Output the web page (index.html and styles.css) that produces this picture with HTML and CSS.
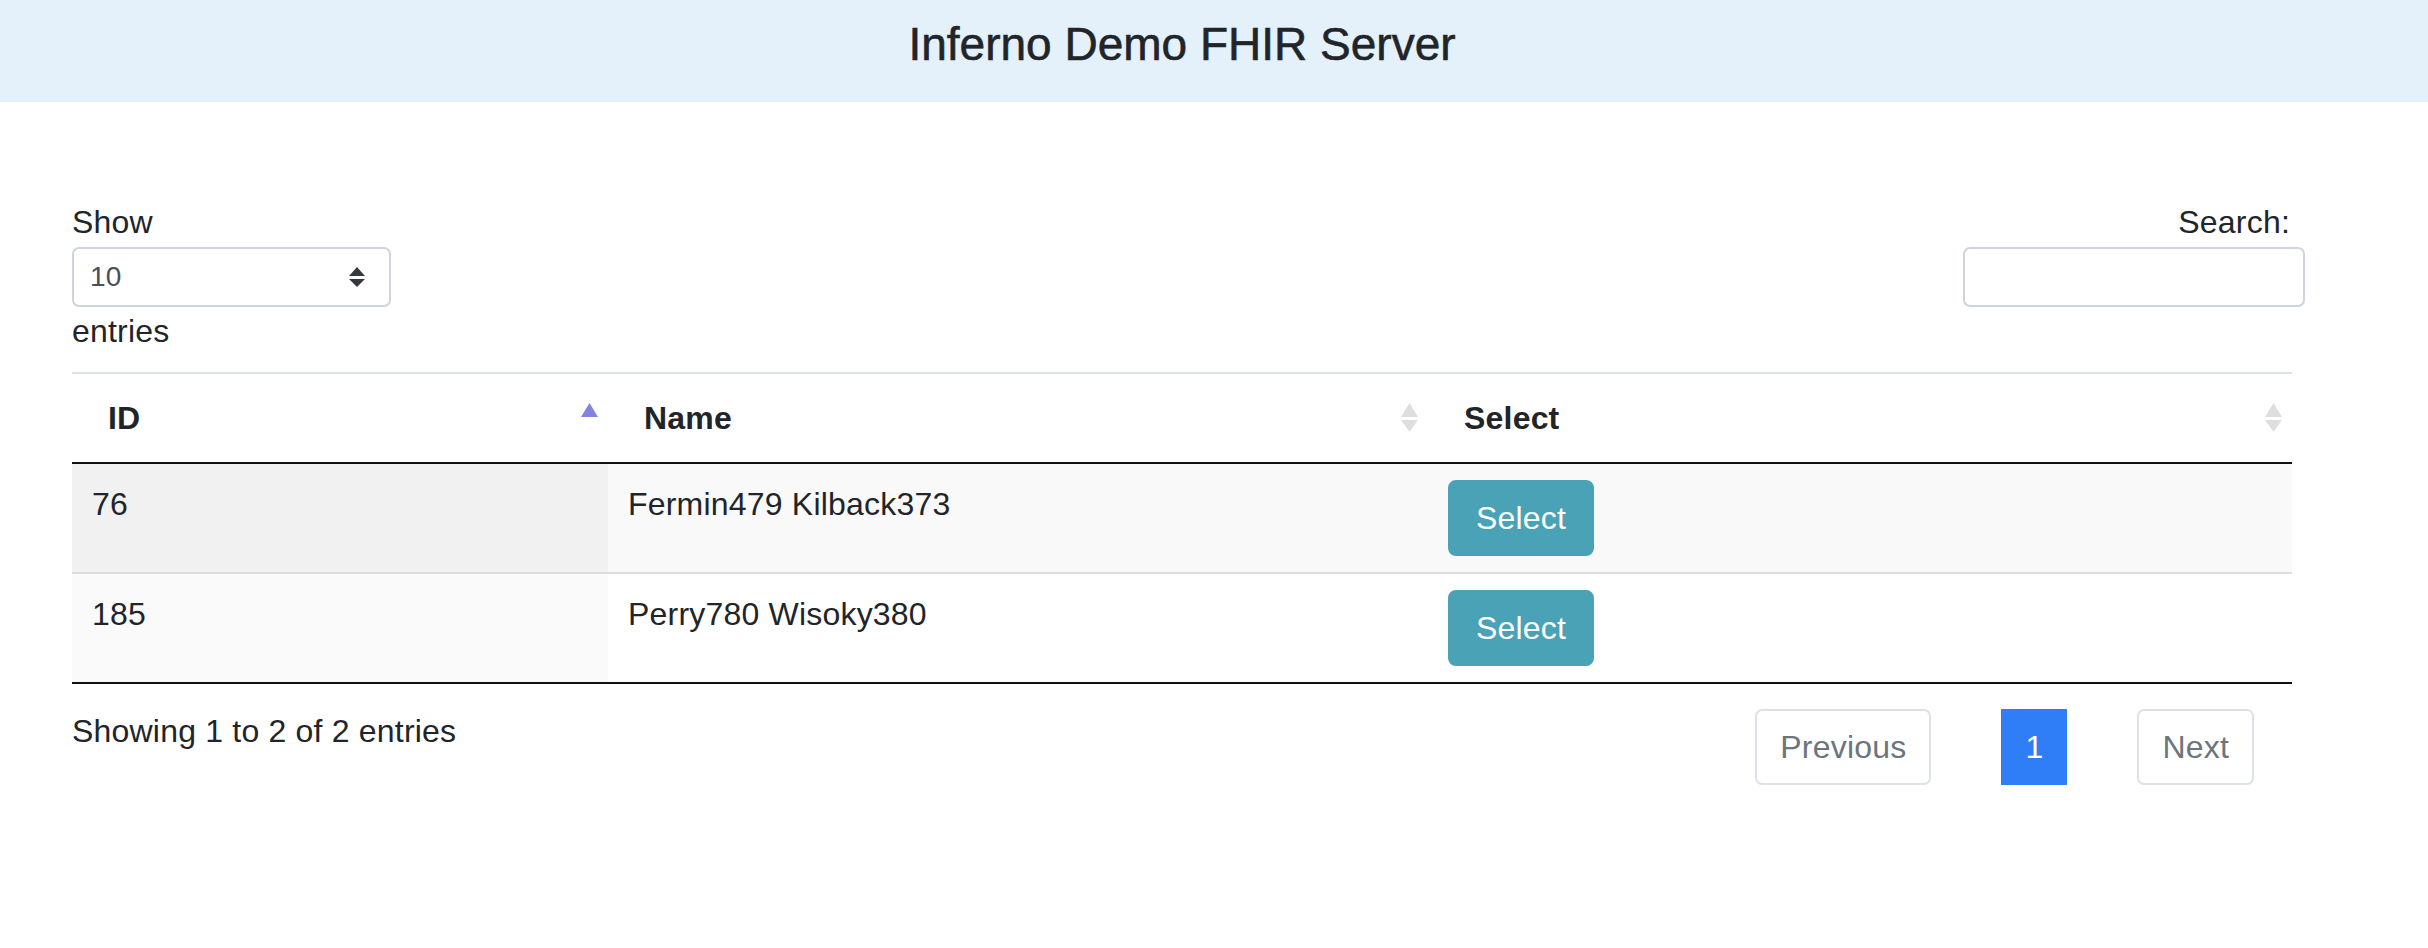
FILE: index.html
```html
<!DOCTYPE html>
<html lang="en">
<head>
<meta charset="utf-8">
<title>Inferno Demo FHIR Server</title>
<link rel="stylesheet" href="styles.css">
</head>
<body>
<header class="topbar">
  <h1 class="title">Inferno Demo FHIR Server</h1>
</header>
<main class="page">
  <div class="controls">
    <div class="length">
      <div class="ctl-label">Show</div>
      <div class="select-box">
        <span class="select-value">10</span>
        <svg class="select-caret" width="16" height="20" viewBox="0 0 16 20"><polygon points="8,0 16,9 0,9" fill="#343a40"/><polygon points="0,12 16,12 8,20" fill="#343a40"/></svg>
      </div>
      <div class="ctl-label">entries</div>
    </div>
    <div class="filter">
      <div class="ctl-label search-label">Search:</div>
      <div class="search-input"></div>
    </div>
  </div>

  <table class="grid">
    <thead>
      <tr>
        <th class="col-id"><div class="th-inner"><span>ID</span><svg width="17" height="30" viewBox="0 0 17 30"><polygon points="8.5,0 17,14 0,14" fill="#8085e0"/></svg></div></th>
        <th class="col-name"><div class="th-inner"><span>Name</span><svg width="17" height="30" viewBox="0 0 17 30"><polygon points="8.5,0 17,14 0,14" fill="#dedede"/><polygon points="0,17 17,17 8.5,29" fill="#dedede"/></svg></div></th>
        <th class="col-sel"><div class="th-inner"><span>Select</span><svg width="17" height="30" viewBox="0 0 17 30"><polygon points="8.5,0 17,14 0,14" fill="#dedede"/><polygon points="0,17 17,17 8.5,29" fill="#dedede"/></svg></div></th>
      </tr>
    </thead>
    <tbody>
      <tr class="odd">
        <td class="sorted">76</td>
        <td>Fermin479 Kilback373</td>
        <td><button class="btn-select">Select</button></td>
      </tr>
      <tr class="even">
        <td class="sorted">185</td>
        <td>Perry780 Wisoky380</td>
        <td><button class="btn-select">Select</button></td>
      </tr>
    </tbody>
  </table>

  <div class="footer-row">
    <div class="info">Showing 1 to 2 of 2 entries</div>
    <nav class="pager">
      <span class="page-btn disabled">Previous</span>
      <span class="page-btn current">1</span>
      <span class="page-btn disabled">Next</span>
    </nav>
  </div>
</main>
</body>
</html>
```
FILE: styles.css
```css
* { box-sizing: border-box; }

body {
  margin: 0;
  background: #ffffff;
  color: #212529;
  font-family: "Liberation Sans", Arial, sans-serif;
  font-size: 32px;
  line-height: 48px;
  letter-spacing: 0.2px;
}

.topbar {
  height: 102px;
  background: #e4f1fb;
  padding: 17px 64px 0 0;
  text-align: center;
}

.title {
  margin: 0;
  font-size: 46px;
  line-height: 55px;
  font-weight: 500;
  letter-spacing: 0;
  color: #212529;
  -webkit-text-stroke: 0.6px #212529;
}

.page {
  padding: 96px 0 0 72px;
}

.controls {
  width: 2233px;
  display: flex;
  justify-content: space-between;
  align-items: flex-start;
}

.ctl-label {
  height: 48px;
}

.select-box {
  margin-top: 1px;
  width: 319px;
  height: 60px;
  border: 2px solid #ced4da;
  border-radius: 7px;
  display: flex;
  align-items: center;
  justify-content: space-between;
  padding: 0 24px 0 16px;
  font-size: 28px;
  color: #495057;
}

.select-value {
  line-height: 1;
}

.filter {
  display: flex;
  flex-direction: column;
  align-items: flex-end;
}

.search-label {
  padding-right: 15px;
}

.search-input {
  margin-top: 1px;
  width: 342px;
  height: 60px;
  border: 2px solid #ced4da;
  border-radius: 7px;
  background: #fff;
}

.grid {
  margin-top: 17px;
  width: 2220px;
  table-layout: fixed;
  border-collapse: separate;
  border-spacing: 0;
  border-bottom: 2px solid #111111;
}

.col-id { width: 536px; }
.col-name { width: 820px; }
.col-sel { width: 864px; }

.grid th {
  text-align: left;
  font-weight: bold;
  padding: 20px 10px 20px 36px;
  border-top: 2px solid #dee2e6;
  border-bottom: 2px solid #111111;
}

.th-inner {
  display: flex;
  justify-content: space-between;
  align-items: center;
}

.th-inner svg {
  display: block;
  flex: none;
}

.grid td {
  padding: 16px 20px;
  vertical-align: top;
}

.grid tr.even td {
  border-top: 2px solid #dddddd;
}

.grid tr.odd td { background: #f9f9f9; }
.grid tr.odd td.sorted { background: #f1f1f1; }
.grid tr.even td { background: #ffffff; }
.grid tr.even td.sorted { background: #fafafa; }

.btn-select {
  display: block;
  height: 76px;
  padding: 12px 26px;
  border: 2px solid #4aa2b6;
  border-radius: 8px;
  background: #4aa2b6;
  color: #ffffff;
  font-family: "Liberation Sans", Arial, sans-serif;
  font-size: 32px;
  line-height: 48px;
  letter-spacing: 0.2px;
}

.footer-row {
  width: 2220px;
  margin-top: 23px;
  padding-right: 38px;
  display: flex;
  justify-content: space-between;
  align-items: flex-start;
}

.pager {
  margin-top: 2px;
  display: flex;
  gap: 70px;
}

.page-btn {
  display: block;
  height: 76px;
  padding: 16px 23px;
  line-height: 40px;
  border: 2px solid #dee2e6;
  border-radius: 7px;
  color: #6c757d;
  background: #fff;
}

.page-btn.current {
  padding: 16px 22px;
  background: #2f7ef7;
  border-color: #2f7ef7;
  border-radius: 0;
  color: #ffffff;
}
```
